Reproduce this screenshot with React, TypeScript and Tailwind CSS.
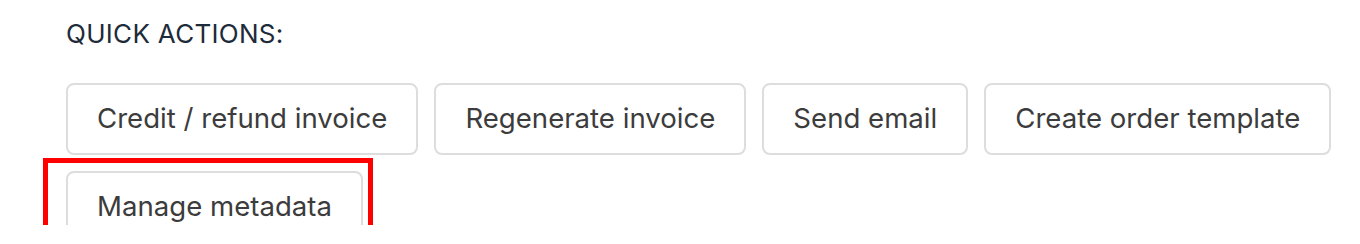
const actions = [
    'Credit / refund invoice',
    'Regenerate invoice',
    'Send email',
    'Create order template',
];

function ActionButton({ label }: { label: string }) {
    return (
        <button
            type="button"
            className="flex h-[72px] items-center rounded-[8px] border-2 border-[#dddddd] bg-white px-[29px] text-[27.6px] text-[#3c3c3c]"
        >
            {label}
        </button>
    );
}

export default function App() {
    return (
        <div className="h-[244px] w-[1360px] bg-white font-['Inter',sans-serif]">
            <div className="h-[225px] overflow-hidden pl-[66px]">
                <h2 className="pt-[18px] text-[26px] leading-[32px] font-normal tracking-[0.3px] text-[#1d2b3a]">
                    QUICK ACTIONS:
                </h2>

                <div className="mt-[33px] flex flex-wrap gap-4">
                    {actions.map((a) => (
                        <ActionButton key={a} label={a} />
                    ))}
                    <div className="relative">
                        <ActionButton label="Manage metadata" />
                        {/* highlight box */}
                        <div className="pointer-events-none absolute -top-[13px] -left-[23px] h-[120px] w-[330px] border-[5px] border-[#ff0000]" />
                    </div>
                </div>
            </div>
        </div>
    );
}
